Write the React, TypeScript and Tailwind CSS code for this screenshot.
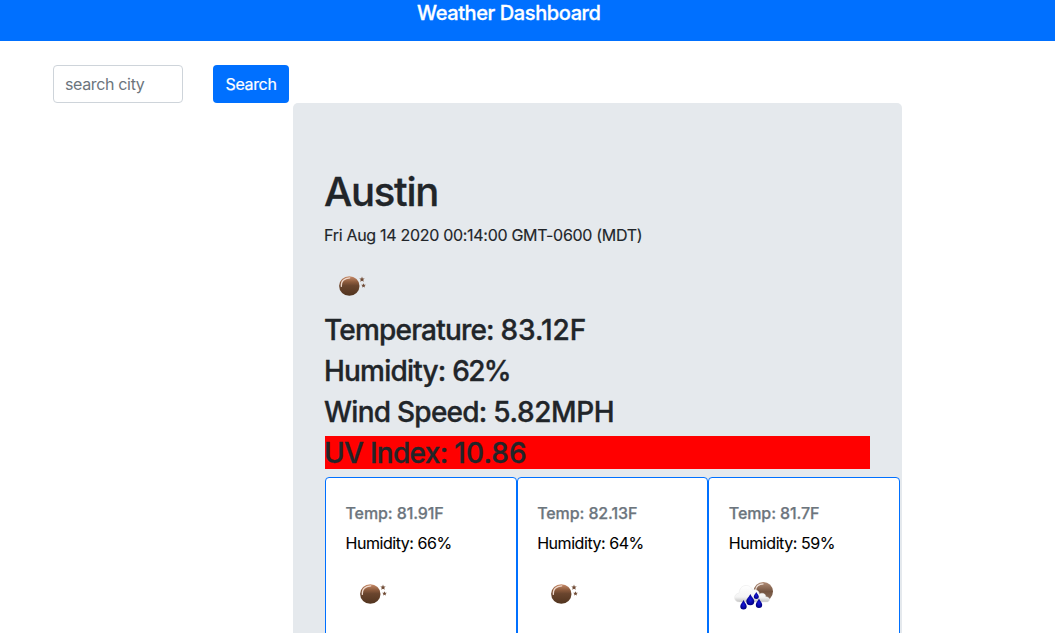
import React from "react";

function MoonIcon() {
  return (
    <svg width="50" height="50" viewBox="0 0 50 50" aria-hidden="true">
      <defs>
        <linearGradient id="moon" x1="0" y1="0" x2="0" y2="1">
          <stop offset="0" stopColor="#c98c6a" />
          <stop offset="0.3" stopColor="#8b5a3c" />
          <stop offset="0.48" stopColor="#6a452e" />
          <stop offset="1" stopColor="#51341f" />
        </linearGradient>
      </defs>
      <ellipse cx="24.3" cy="25" rx="10.2" ry="9.8" fill="url(#moon)" />
      <path d="M16.3 25.5C15.8 20 19.3 17.1 24.8 16.8" fill="none" stroke="#f0d9cc" strokeWidth="1.2" strokeLinecap="round" />
      <path d="M37 15.6l.7 1.8 2 .1-1.5 1.3.6 1.9-1.8-1-1.8 1 .6-1.9-1.5-1.3 2-.1z" fill="#704b35" />
      <path d="M38.5 22.2l.6 1.5 1.7.1-1.3 1.1.5 1.7-1.5-.9-1.5.9.5-1.7-1.3-1.1 1.7-.1z" fill="#704b35" />
    </svg>
  );
}

function RainIcon() {
  return (
    <svg width="50" height="50" viewBox="-1 0 50 50" aria-hidden="true">
      <defs>
        <linearGradient id="rainMoon" x1="0" y1="0" x2="0" y2="1">
          <stop offset="0" stopColor="#b08c76" />
          <stop offset="0.5" stopColor="#745440" />
          <stop offset="1" stopColor="#8b715f" />
        </linearGradient>
        <linearGradient id="cloud" x1="0" y1="0" x2="0" y2="1">
          <stop offset="0" stopColor="#ffffff" />
          <stop offset="0.7" stopColor="#f4f4f4" />
          <stop offset="1" stopColor="#c2c2c2" />
        </linearGradient>
        <radialGradient id="drop">
          <stop offset="0" stopColor="#1717e0" />
          <stop offset="1" stopColor="#000080" />
        </radialGradient>
      </defs>
      <ellipse cx="33.3" cy="22.6" rx="9.7" ry="9.6" fill="url(#rainMoon)" />
      <path d="M25.5 21.6c.3-4.2 3-6.5 8-6.7" fill="none" stroke="#eee1d9" strokeWidth="1.2" />
      <path d="M9.5 33c-6.5 0-6.5-8.2-.4-8.9.3-9 11-10.2 13.4-3 3.5-1.4 7 .8 6.8 4.2 2.8-2.3 7-.2 6.3 2.5 5 .2 5.4 5.2.6 5.2z" fill="url(#cloud)" stroke="#e6e6e6" strokeWidth=".5" />
      <path d="M13.5 31c1 2.4 3.2 4 3.2 6.2a3.2 3.2 0 0 1-6.4 0c0-2.2 2.2-3.8 3.2-6.2z" fill="url(#drop)" />
      <path d="M20.3 25c1.1 3 4 4.8 4 7.3a4 4 0 0 1-8 0c0-2.5 2.9-4.3 4-7.3z" fill="url(#drop)" />
      <path d="M26.3 23c.7 1.9 2.5 2.9 2.5 4.5a2.5 2.5 0 0 1-5 0c0-1.6 1.8-2.6 2.5-4.5z" fill="url(#drop)" />
      <path d="M29 29.5c1 2.4 3.2 4 3.2 6.2a3.2 3.2 0 0 1-6.4 0c0-2.2 2.2-3.8 3.2-6.2z" fill="url(#drop)" />
    </svg>
  );
}

const forecast = [
  { temp: "81.91F", humidity: "66%", rain: false },
  { temp: "82.13F", humidity: "64%", rain: false },
  { temp: "81.7F", humidity: "59%", rain: true },
];

export default function App() {
  return (
    <div className="h-[633px] w-full overflow-hidden bg-white font-['Inter','Liberation_Sans',sans-serif] text-base leading-6 tracking-[-0.35px] text-[#212529]">
      <header className="h-[41px] bg-[#0070ff] pl-[417px] text-white">
        <h1 className="pt-px text-xl leading-6 font-medium tracking-[-0.4px] [-webkit-text-stroke:0.3px]">Weather Dashboard</h1>
      </header>
      <form className="flex h-[62px] gap-[30px] pt-6 pl-[53px]" onSubmit={(e) => e.preventDefault()}>
        <input
          aria-label="City"
          placeholder="search city"
          className="h-[38px] w-[130px] rounded border border-[#ced4da] px-[11px] py-1.5 tracking-[-0.35px] placeholder:text-[#6c757d]"
        />
        <button className="h-[38px] w-[76px] rounded bg-[#0070ff] text-white [-webkit-text-stroke:0.2px]">Search</button>
      </form>
      <main className="ml-[293px] h-[720px] w-[609px] rounded-[5px] bg-[#e5e9ed] px-8 pt-[65px]">
        <h2 className="-ml-px mb-[7px] text-[40px] leading-12 font-medium tracking-[-1.3px] [-webkit-text-stroke:0.3px]">Austin</h2>
        <p className="-ml-px tracking-[-0.3px] [-webkit-text-stroke:0.15px]">Fri Aug 14 2020 00:14:00 GMT-0600 (MDT)</p>
        <div className="mt-3.5 mb-[2px] h-[50px]"><MoonIcon /></div>
        <div className="flex flex-col gap-2 text-[28px] leading-8 font-medium tracking-[-0.8px] [-webkit-text-stroke:0.35px]">
          <h3 className="-ml-px pt-px">Temperature: <span className="tracking-[-0.05px]">83.12F</span></h3>
          <h3 className="-ml-px pt-px">Humidity: <span className="tracking-[-1.6px]">62%</span></h3>
          <h3 className="-ml-px pt-px tracking-[-0.75px]">Wind Speed: <span className="tracking-[-0.4px]">5.82MPH</span></h3>
          <h3 className="bg-[#ff0000] pt-px tracking-[-0.7px]"><span className="-ml-px">UV Index: <span className="tracking-[0.1px]">10.86</span></span></h3>
        </div>
        <div className="mt-2 flex w-[575px]">
          {forecast.map((day) => (
            <article key={day.temp} className="h-[240px] flex-1 rounded border border-[#0070ff] bg-white px-[19.5px] pt-[26px]">
              <h4 className="mb-2 leading-[19px] font-medium tracking-[-0.1px] text-[#6c757d] [-webkit-text-stroke:0.25px]">Temp: {day.temp}</h4>
              <p className="tracking-[-0.45px] text-black [-webkit-text-stroke:0.1px]">Humidity: {day.humidity}</p>
              <div className="mt-3.5">{day.rain ? <RainIcon /> : <MoonIcon />}</div>
            </article>
          ))}
        </div>
      </main>
    </div>
  );
}
